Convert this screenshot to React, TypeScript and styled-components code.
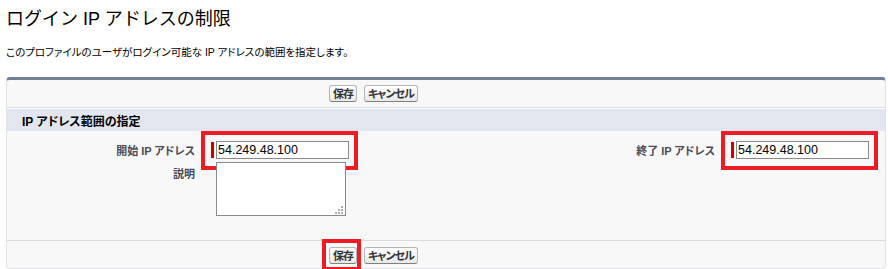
import styled, { createGlobalStyle, css } from 'styled-components';

const GlobalStyle = createGlobalStyle`
  body {
    margin: 0;
    background: #fff;
    font-family: 'Liberation Sans', 'Noto Sans CJK JP', sans-serif;
    color: #000;
  }
`;

const marked = css`
  &::after {
    content: '';
    position: absolute;
    border: 4px solid #ed1c24;
    pointer-events: none;
  }
`;

const Page = styled.div`
  padding: 7px 2px 0 6px;
`;

const Title = styled.h1`
  margin: 0;
  font-size: 18px;
  font-weight: normal;
  line-height: 24px;
  color: #000;
`;

const Description = styled.p`
  margin: 14px 0 18px;
  font-size: 10.5px;
  line-height: 14px;
  color: #000;
  font-feature-settings: 'palt' 1;
`;

const Panel = styled.div`
  width: 880px;
  box-sizing: border-box;
  background: #f8f8f8;
  border: 1px solid #e0e3e5;
  border-top: 3px solid #747e96;
  border-radius: 4px;
`;

const ButtonBar = styled.div<{ $bottom?: boolean }>`
  display: flex;
  gap: 7px;
  padding: ${p => (p.$bottom ? '6px 0 4px 322px' : '5px 0 5px 322px')};
  ${p => (p.$bottom ? 'border-top: 1px solid #dbdbdb;' : 'border-bottom: 1px solid #dbdbdb;')}
`;

const Button = styled.button<{ $marked?: boolean }>`
  position: relative;
  height: 17px;
  padding: 0 3px;
  font-family: inherit;
  font-size: 11px;
  font-weight: bold;
  line-height: 14px;
  letter-spacing: -1px;
  color: #333;
  font-feature-settings: 'palt' 1;
  background: linear-gradient(#ffffff, #e9e9e9);
  border: 1px solid #b5b5b5;
  border-bottom-color: #7f7f7f;
  border-radius: 3px;
  ${p => p.$marked && marked}
  &::after {
    inset: -9px -5px -8px -8px;
  }
`;

const SectionHeader = styled.h3`
  margin: 0;
  height: 22px;
  padding: 0 15px;
  display: flex;
  align-items: center;
  border-top: 1px solid #fff;
  background: #e3e6ef;
  font-size: 12px;
  font-weight: bold;
  color: #000;
  font-feature-settings: 'palt' 1;
`;

const FieldGrid = styled.div`
  display: grid;
  grid-template-columns: 198px 360px 160px 1fr;
  row-gap: 3px;
  padding: 10px 0 24px;
`;

const Label = styled.label<{ $top?: boolean }>`
  align-self: ${p => (p.$top ? 'start' : 'center')};
  padding: ${p => (p.$top ? '3px 10px 0 0' : '0 10px 1px 0')};
  text-align: right;
  font-size: 11px;
  font-weight: bold;
  color: #4a4a56;
  font-feature-settings: 'palt' 1;
`;

const DataCell = styled.div`
  padding-left: 6px;
  display: flex;
  align-items: flex-start;
`;

const Field = styled.span<{ $marked?: boolean }>`
  position: relative;
  display: inline-flex;
  align-items: center;
  gap: 2px;
  ${p => p.$marked && marked}
  &::after {
    inset: -10px -9px -11px -10px;
  }
`;

const RequiredBar = styled.span`
  width: 3px;
  height: 16px;
  background: #c00;
`;

const TextInput = styled.input`
  width: 133px;
  height: 18px;
  box-sizing: border-box;
  margin: 0;
  padding: 0 1px;
  border: 1px solid #8a8a8a;
  background: #fff;
  font-family: 'Liberation Sans', Arial, sans-serif;
  font-size: 12.5px;
  color: #000;
`;

const AreaWrap = styled.span`
  position: relative;
  display: inline-block;
  margin-left: 5px;
`;

const TextArea = styled.textarea`
  display: block;
  width: 130px;
  height: 54px;
  box-sizing: border-box;
  margin: 0;
  border: 1px solid #8a8a8a;
  background: #fff;
  resize: none;
`;

const Grip = styled.svg`
  position: absolute;
  right: 3px;
  bottom: 2px;
`;

export default function App() {
  return (
    <>
      <GlobalStyle />
      <Page>
        <Title>ログイン IP アドレスの制限</Title>
        <Description>このプロファイルのユーザがログイン可能な IP アドレスの範囲を指定します。</Description>
        <Panel>
          <ButtonBar>
            <Button>保存</Button>
            <Button>キャンセル</Button>
          </ButtonBar>
          <SectionHeader>IP アドレス範囲の指定</SectionHeader>
          <FieldGrid>
            <Label>開始 IP アドレス</Label>
            <DataCell>
              <Field $marked>
                <RequiredBar />
                <TextInput defaultValue="54.249.48.100" />
              </Field>
            </DataCell>
            <Label>終了 IP アドレス</Label>
            <DataCell>
              <Field $marked>
                <RequiredBar />
                <TextInput defaultValue="54.249.48.100" />
              </Field>
            </DataCell>
            <Label $top>説明</Label>
            <DataCell>
              <AreaWrap>
                <TextArea />
                <Grip width="9" height="9" viewBox="0 0 9 9">
                  <g fill="#b0b0b0">
                    <rect x="7" y="1" width="2" height="2" />
                    <rect x="4" y="4" width="2" height="2" />
                    <rect x="7" y="4" width="2" height="2" />
                    <rect x="1" y="7" width="2" height="2" />
                    <rect x="4" y="7" width="2" height="2" />
                    <rect x="7" y="7" width="2" height="2" />
                  </g>
                </Grip>
              </AreaWrap>
            </DataCell>
          </FieldGrid>
          <ButtonBar $bottom>
            <Button $marked>保存</Button>
            <Button>キャンセル</Button>
          </ButtonBar>
        </Panel>
      </Page>
    </>
  );
}
